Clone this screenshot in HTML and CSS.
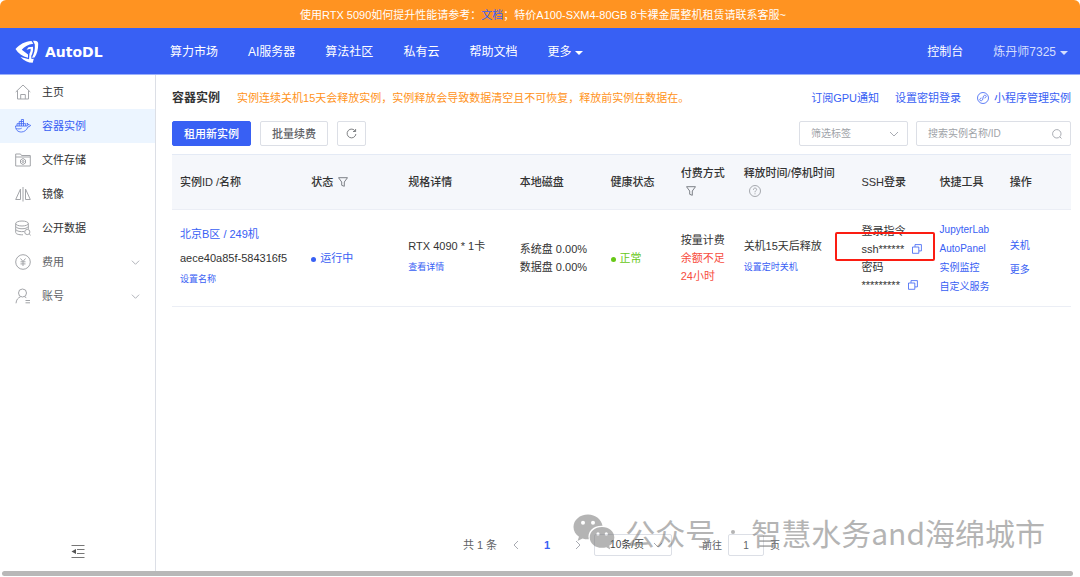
FILE: index.html
```
<!DOCTYPE html>
<html lang="zh-CN">

<head>
    <meta charset="utf-8" />
    <title>AutoDL 容器实例</title>
    <meta name="viewport" content="width=device-width, initial-scale=1.0" />
    <link rel="stylesheet" href="styles.css">
</head>

<body>
    <!-- 图标 -->
    <svg class="symbols" aria-hidden="true">
        <symbol id="i-down" viewBox="0 0 10 10"><path d="M1 3l4 4 4-4" /></symbol>
        <symbol id="i-left" viewBox="0 0 10 10"><path d="M7 1L3 5l4 4" /></symbol>
        <symbol id="i-right" viewBox="0 0 10 10"><path d="M3 1l4 4-4 4" /></symbol>
        <symbol id="i-filter" viewBox="0 0 10 10"><path d="M.5 .7h9L6.300 5v4.300L3.700 8.300V5z" /></symbol>
        <symbol id="i-copy" viewBox="0 0 10 10"><path d="M.5 3h6.300v6.300H.5zM3 2.800V.6h6.400v6.300H7" /></symbol>
    </svg>

    <div class="notice">使用RTX 5090如何提升性能请参考：<a href="#">文档</a>；特价A100-SXM4-80GB 8卡裸金属整机租赁请联系客服~</div>

    <header class="header">
        <a class="logo" href="#">
            <svg width="24" height="24" viewBox="0 0 24 24">
                <path d="M.5 9C5 4 10 1.500 16.500 1L18.300 3.800C13 4.500 9 7 6.800 9.800L13 14.500V17.800C7.500 16.500 3 13.500 .5 9z" />
                <path d="M18 .8C22 .2 23.300 1.500 23.200 4 23.200 9.500 22 14 19.500 17.500L17 17.800C19.300 13.500 20.200 9.500 19.800 4.500z" />
                <path d="M5.500 17L14 19.300 14.500 13.500C15.600 11.800 15.900 10.300 15.600 8.700L11.500 9.800 13.500 7.200 18 6.800C18.500 10.500 17.500 13.500 16.200 16L16.500 19 18.800 18.700 17.700 22.800C13 22.800 9 20.800 5.500 17z" />
            </svg>
            <span>AutoDL</span>
        </a>
        <nav class="nav">
            <a href="#">算力市场</a>
            <a href="#">AI服务器</a>
            <a href="#">算法社区</a>
            <a href="#">私有云</a>
            <a href="#">帮助文档</a>
            <a href="#">更多<i class="caret"></i></a>
        </nav>
        <div class="user">
            <a href="#">控制台</a>
            <a class="user-name" href="#">炼丹师7325<i class="caret"></i></a>
        </div>
    </header>

    <div class="wrap">
        <aside class="side">
            <ul class="menu">
                <li><a href="#">
                    <svg class="icon" viewBox="0 0 16 16"><path d="M.7 8L8 1l7.300 7M2.500 6.500V15h11V6.500M5.700 15v-4.500h4.600V15" /></svg>
                    <span>主页</span></a></li>
                <li class="active"><a href="#">
                    <svg class="icon" viewBox="0 0 16 16"><path d="M.5 8h11.700c.4-1 .3-2-.2-2.900 1 .5 1.500 1.100 1.700 1.900.8-.2 1.500 0 2 .4-.5 1-1.300 1.400-2.700 1.400-1.300 3.400-3.700 5.200-6.700 5.200C3 14 .5 12 .5 8zM2 5.700h8.700V8M2 8V5.700M4.200 8V3.500h4.300M6.400 8V1.500h2.100V8M1.200 10.500c2 .8 4 .4 5.500-.3" /></svg>
                    <span>容器实例</span></a></li>
                <li><a href="#">
                    <svg class="icon" viewBox="0 0 16 16"><path d="M.7 14V2h4.800l1 1.500h8.800V14zM.7 5h14.600M8 6.500l2.500 1.500v3L8 12.500 5.500 11V8z" /><circle cx="8" cy="9.500" r="1" /></svg>
                    <span>文件存储</span></a></li>
                <li><a href="#">
                    <svg class="icon" viewBox="0 0 16 16"><path d="M8 1v14.500M5.500 3v10.500H.7zM10.500 3v10.500h4.800z" /></svg>
                    <span>镜像</span></a></li>
                <li><a href="#">
                    <svg class="icon" viewBox="0 0 16 16"><ellipse cx="7" cy="3.500" rx="6.300" ry="2.500" /><path d="M.7 3.500v9c0 1.500 3 2.400 7.300 2.300M13.300 3.500v5.500M.7 6.500C2 9.500 12 9.500 13.300 6.500M.7 9.500c1 1.800 5 2.500 8.500 2" /><circle cx="12.300" cy="12" r="2.600" /><path d="M14.200 14l1.500 1.300" /></svg>
                    <span>公开数据</span></a></li>
                <li class="group"><a href="#">
                    <svg class="icon" viewBox="0 0 16 16"><circle cx="8" cy="8" r="7.300" /><path d="M5.500 4.500L8 7.500l2.500-3M8 7.500v4.500M5.500 7.800h5M5.500 9.900h5" /></svg>
                    <span>费用</span><svg class="arrow" viewBox="0 0 10 10"><use href="#i-down" /></svg></a></li>
                <li class="group"><a href="#">
                    <svg class="icon" viewBox="0 0 16 16"><circle cx="7.500" cy="5" r="4" /><path d="M1 15.300c.3-3.600 2-5.500 4.500-6.500M9.500 8.700l1.800 1M10.500 12.500h4.500M10.500 14.800h4.500" /></svg>
                    <span>账号</span><svg class="arrow" viewBox="0 0 10 10"><use href="#i-down" /></svg></a></li>
            </ul>
            <button class="fold" aria-label="收起菜单">
                <svg width="14" height="14" viewBox="0 0 14 14"><path d="M.5 1.500h13M6 5.500h7.500M6 9.500h7.500M.5 13.500h13" /><path class="tri" d="M.5 7.500L5 5v5z" /></svg>
            </button>
        </aside>

        <main class="main">
            <div class="title-row">
                <h1>容器实例</h1>
                <p>实例连续关机15天会释放实例，实例释放会导致数据清空且不可恢复，释放前实例在数据在。</p>
                <div class="title-links">
                    <a href="#">订阅GPU通知</a>
                    <a href="#">设置密钥登录</a>
                    <a class="mini" href="#">
                        <svg width="12" height="12" viewBox="0 0 12 12"><circle cx="6" cy="6" r="5.500" /><path d="M4.500 6C2 6.500 2.500 9 4.300 8.800 7 8.500 5 3.500 7.700 3.200 9.500 3 10 5.500 7.500 6" /></svg>
                        小程序管理实例</a>
                </div>
            </div>

            <div class="tools">
                <button class="btn primary">租用新实例</button>
                <button class="btn">批量续费</button>
                <button class="btn refresh" aria-label="刷新">
                    <svg width="11" height="11" viewBox="0 0 11 11"><path d="M9.300 3.200A4.400 4.400 0 1 0 9.900 6M9.600 1v2.500H7" /></svg>
                </button>
                <label class="field tag-field">
                    <select aria-label="筛选标签">
                        <option>筛选标签</option>
                    </select>
                    <svg class="arrow" viewBox="0 0 10 10"><use href="#i-down" /></svg>
                </label>
                <label class="field search-field">
                    <input type="text" placeholder="搜索实例名称/ID" aria-label="搜索实例">
                    <svg class="arrow" viewBox="0 0 10 10"><circle cx="4.800" cy="4.800" r="4.200" /><path d="M7.800 7.800l1.700 1.700" /></svg>
                </label>
            </div>

            <table class="list">
                <thead>
                    <tr>
                        <th class="c-id">实例ID /名称</th>
                        <th class="c-status">状态 <svg class="filter"><use href="#i-filter" /></svg></th>
                        <th class="c-spec">规格详情</th>
                        <th class="c-disk">本地磁盘</th>
                        <th class="c-health">健康状态</th>
                        <th class="c-pay">付费方式<br><svg class="filter under"><use href="#i-filter" /></svg></th>
                        <th class="c-time">释放时间/停机时间<br><svg class="help under" viewBox="0 0 12 12"><circle cx="6" cy="6" r="5.500" /><path d="M4.400 4.800C4.400 2.500 7.700 2.600 7.600 4.600 7.500 5.700 6 5.700 6 7.300M6 8.300v1" /></svg></th>
                        <th class="c-ssh">SSH登录</th>
                        <th class="c-quick">快捷工具</th>
                        <th>操作</th>
                    </tr>
                </thead>
                <tbody>
                    <tr>
                        <td class="tall"><a href="#">北京B区 / 249机</a><br>aece40a85f-584316f5<a class="sub" href="#">设置名称</a></td>
                        <td class="blue"><i class="dot"></i>运行中</td>
                        <td class="tall">RTX 4090 * 1卡<a class="sub" href="#">查看详情</a></td>
                        <td>系统盘 0.00%<br>数据盘 0.00%</td>
                        <td class="green"><i class="dot"></i>正常</td>
                        <td>按量计费<br><span class="red">余额不足<br>24小时</span></td>
                        <td class="tall">关机15天后释放<a class="sub" href="#">设置定时关机</a></td>
                        <td>
                            <div>登录指令</div>
                            <div class="secret marked">ssh****** <button class="copy" aria-label="复制指令"><svg><use href="#i-copy" /></svg></button></div>
                            <div>密码</div>
                            <div class="secret">********* <button class="copy" aria-label="复制密码"><svg><use href="#i-copy" /></svg></button></div>
                        </td>
                        <td class="quick"><a href="#">JupyterLab</a><a href="#">AutoPanel</a><a href="#">实例监控</a><a href="#">自定义服务</a></td>
                        <td class="ops"><a href="#">关机</a><a href="#">更多</a></td>
                    </tr>
                </tbody>
            </table>

            <div class="pager">
                <span>共 1 条</span>
                <button class="step prev" aria-label="上一页"><svg class="arrow" viewBox="0 0 10 10"><use href="#i-left" /></svg></button>
                <button class="num">1</button>
                <button class="step" aria-label="下一页"><svg class="arrow" viewBox="0 0 10 10"><use href="#i-right" /></svg></button>
                <label class="field size-field">
                    <select aria-label="每页条数">
                        <option>10条/页</option>
                    </select>
                    <svg class="arrow" viewBox="0 0 10 10"><use href="#i-down" /></svg>
                </label>
                <label class="jump">前往<input type="text" value="1">页</label>
            </div>
        </main>
    </div>

    <div class="scrollbar"></div>

    <!-- 水印 -->
    <div class="watermark">
        <svg width="42" height="36" viewBox="0 0 42 36">
            <path fill-rule="evenodd" d="M15 .5C6.800 .5 .5 6 .5 13c0 4 2 7.300 5.500 9.700L4.500 27l5-2.600c2 .6 4 1 6.300.9C14 17.500 20 11.500 29.500 11.800 28.500 5.500 22.500 .5 15 .5zM10 6.700a2 2 0 1 1 0 4 2 2 0 0 1 0-4zM20 6.700a2 2 0 1 1 0 4 2 2 0 0 1 0-4z" />
            <path fill-rule="evenodd" d="M29 13c-7 0-12.300 4.600-12.300 10.400S22 33.800 29 33.800c1.500 0 3-.2 4.300-.6l4 2.200-1.100-3.600c3.200-2 5.100-4.900 5.100-8.400C41.300 17.600 36 13 29 13zM25 18.300a1.600 1.600 0 1 1 0 3.200 1.600 1.600 0 0 1 0-3.200zM33.300 18.300a1.600 1.600 0 1 1 0 3.200 1.600 1.600 0 0 1 0-3.200z" />
        </svg>
        <span>公众号</span><i class="point"></i><span>智慧水务and海绵城市</span>
    </div>
</body>

</html>
```
FILE: styles.css
```
*,
*::after {
    margin: 0;
    padding: 0;
    box-sizing: border-box;
}

body {
    position: relative;
    min-height: 100vh;
    display: flex;
    flex-direction: column;
    background: #fff;
    color: #333;
    font: 11px/18px "Liberation Sans", "Noto Sans CJK SC", sans-serif;
}

a {
    color: #3860f4;
    text-decoration: none;
}

li {
    list-style: none;
}

button,
input,
select {
    font: inherit;
    color: inherit;
    background: none;
    border: 0;
    outline: none;
}

button {
    cursor: pointer;
}

svg {
    fill: none;
    stroke: currentColor;
}

.symbols {
    position: absolute;
    width: 0;
    height: 0;
}

.arrow {
    width: 10px;
    height: 10px;
    color: #a8abb2;
}

/* 顶部 */
.notice {
    height: 28px;
    line-height: 30px;
    text-align: center;
    color: #fff;
    background: #ff9321;
    border-radius: 6px 6px 0 0;
    padding-left: 6px;
}

.header {
    height: 47px;
    display: flex;
    align-items: center;
    padding: 2px 12px 0 15px;
    background: #3860f4;
    border-bottom: 1px solid #9bb0fa;
    font-size: 12px;
}

.header a {
    color: #fff;
}

.logo {
    width: 155px;
    display: flex;
    align-items: center;
    gap: 6px;
    font: bold 14px/20px "DejaVu Sans", sans-serif;
}

.logo svg {
    fill: #fff;
    stroke: none;
}

.nav {
    flex: 1;
    display: flex;
    gap: 30px;
}

.user {
    display: flex;
    gap: 30px;
}

.header .user-name {
    color: #d5defd;
}

.caret {
    display: inline-block;
    margin-left: 4px;
    border: 4px solid transparent;
    border-top-color: currentColor;
    border-bottom: 0;
    vertical-align: 1px;
}

/* 左侧菜单 */
.wrap {
    flex: 1;
    display: flex;
}

.side {
    width: 156px;
    flex: none;
    display: flex;
    flex-direction: column;
    justify-content: space-between;
    align-items: center;
    border-right: 1px solid #dcdfe6;
    padding-bottom: 11px;
}

.menu {
    width: 100%;
}

.menu a {
    height: 34px;
    display: flex;
    align-items: center;
    padding: 0 15px;
    color: #303133;
}

.menu span {
    flex: 1;
}

.menu .icon {
    width: 16px;
    height: 16px;
    margin-right: 11px;
    color: #a3a5a9;
}

.menu .active a {
    color: #3860f4;
    background: #ecf5ff;
}

.menu .active .icon {
    color: #3860f4;
    stroke-width: .8;
}

.menu .group a {
    color: #606266;
}

.menu .group .arrow {
    width: 9px;
    height: 9px;
}

.fold {
    height: 16px;
    color: #777;
}

.fold .tri {
    fill: #555;
    stroke: none;
}

/* 内容 */
.main {
    flex: 1;
    min-width: 0;
    display: flex;
    flex-direction: column;
    padding: 11px 9px 15px 16px;
}

.title-row {
    display: flex;
    align-items: center;
    height: 24px;
    margin-bottom: 11px;
}

.title-row h1 {
    font-size: 12px;
    margin-right: 17px;
}

.title-row p {
    flex: 1;
    color: #ff9321;
}

.title-links {
    display: flex;
    gap: 16px;
}

.mini {
    display: flex;
    align-items: center;
    gap: 5px;
}

.mini svg {
    stroke-width: .8;
}

.tools {
    display: flex;
    margin-bottom: 8px;
}

.btn {
    height: 25px;
    padding: 0 11px;
    margin-right: 9px;
    border: 1px solid #dcdfe6;
    border-radius: 2px;
    color: #606266;
    font-weight: 500;
}

.btn.primary {
    background: #3860f4;
    border-color: #3860f4;
    color: #fff;
}

.refresh {
    display: flex;
    align-items: center;
    padding: 0 8px;
}

.refresh svg {
    stroke-width: .8;
}

.field {
    position: relative;
    height: 25px;
    border: 1px solid #dcdfe6;
    border-radius: 2px;
}

.field select,
.field input {
    display: block;
    width: 100%;
    height: 100%;
    padding: 0 11px;
    appearance: none;
    font-size: 10px;
}

.field select {
    color: #a0a3a8;
}

.field input::placeholder {
    color: #a0a3a8;
}

.field .arrow {
    position: absolute;
    top: 50%;
    right: 8px;
    margin-top: -5px;
    pointer-events: none;
}

.tag-field {
    width: 109px;
    margin: 0 8px 0 auto;
}

.search-field {
    width: 155px;
}

/* 列表 */
.list {
    width: 100%;
    table-layout: fixed;
    border-collapse: separate;
    border-spacing: 0;
}

.list th {
    padding: 9px 0 9px 8px;
    text-align: left;
    font-weight: 500;
    white-space: nowrap;
    background: #f5f7fb;
    border-top: 1px solid #e4eaf5;
    border-bottom: 1px solid #ebeef5;
}

.list td {
    padding: 10px 0 10px 8px;
    border-bottom: 1px solid #ebeef5;
    white-space: nowrap;
}

.c-id { width: 14.6%; }
.c-status { width: 10.8%; }
.c-spec { width: 12.4%; }
.c-disk { width: 10.1%; }
.c-health { width: 7.8%; }
.c-pay { width: 7%; }
.c-time { width: 13.1%; }
.c-ssh { width: 8.7%; }
.c-quick { width: 7.8%; }

.filter {
    width: 10px;
    height: 10px;
    margin-left: 2px;
    color: #7d8087;
    vertical-align: -1px;
}

.help {
    width: 12px;
    height: 12px;
    color: #909399;
    stroke-width: .8;
    vertical-align: -2px;
}

.list .under {
    margin-left: 5px;
}

.list .tall {
    line-height: 24px;
}

.list .sub {
    display: block;
    margin-bottom: 6px;
    font-size: 9px;
    line-height: 18px;
}

.dot {
    display: inline-block;
    width: 5px;
    height: 5px;
    margin-right: 4px;
    border-radius: 50%;
    background: currentColor;
}

.blue {
    color: #3860f4;
}

.green {
    color: #67c817;
}

.red {
    color: #f74d40;
}

.secret {
    position: relative;
    display: flex;
    align-items: center;
    gap: 8px;
}

.copy {
    height: 10px;
    color: #3860f4;
}

.copy svg {
    display: block;
    width: 10px;
    height: 10px;
    stroke-width: .8;
}

/* 红框标注 */
.marked::after {
    content: "";
    position: absolute;
    left: -26px;
    top: -8px;
    width: 100px;
    height: 29px;
    border: 2px solid #fb1d12;
    border-radius: 2px;
    pointer-events: none;
}

.quick a,
.ops a {
    display: block;
    font-size: 10px;
    line-height: 19px;
}

.ops a {
    line-height: 24px;
}

/* 分页 */
.pager {
    display: flex;
    align-items: center;
    justify-content: center;
    margin-top: auto;
    color: #606266;
}

.step,
.num {
    width: 16px;
    height: 22px;
}

.step .arrow {
    display: block;
    margin: 0 auto;
}

.prev {
    margin-left: 11px;
}

.num {
    margin: 0 15px;
    color: #3860f4;
    font-weight: bold;
}

.size-field {
    width: 78px;
    height: 22px;
    margin: 0 30px 0 8px;
}

.size-field select {
    padding-left: 15px;
    color: #444;
}

.jump {
    font-size: 10px;
}

.jump input {
    width: 36px;
    height: 22px;
    margin: 0 6px;
    border: 1px solid #dcdfe6;
    border-radius: 2px;
    text-align: center;
}

.scrollbar {
    height: 5px;
    margin: 0 7px 1px 2px;
    border-radius: 3px;
    background: #b8b8b8;
}

/* 水印 */
.watermark {
    position: absolute;
    right: 35px;
    bottom: 24px;
    display: flex;
    align-items: center;
    color: #777;
    opacity: .55;
    font: 30px/42px "Noto Sans CJK SC", sans-serif;
    pointer-events: none;
}

.watermark svg {
    margin-right: 10px;
    fill: #777;
    stroke: none;
}

.point {
    width: 4px;
    height: 4px;
    margin: 0 16px;
    border-radius: 50%;
    background: #777;
}
```
